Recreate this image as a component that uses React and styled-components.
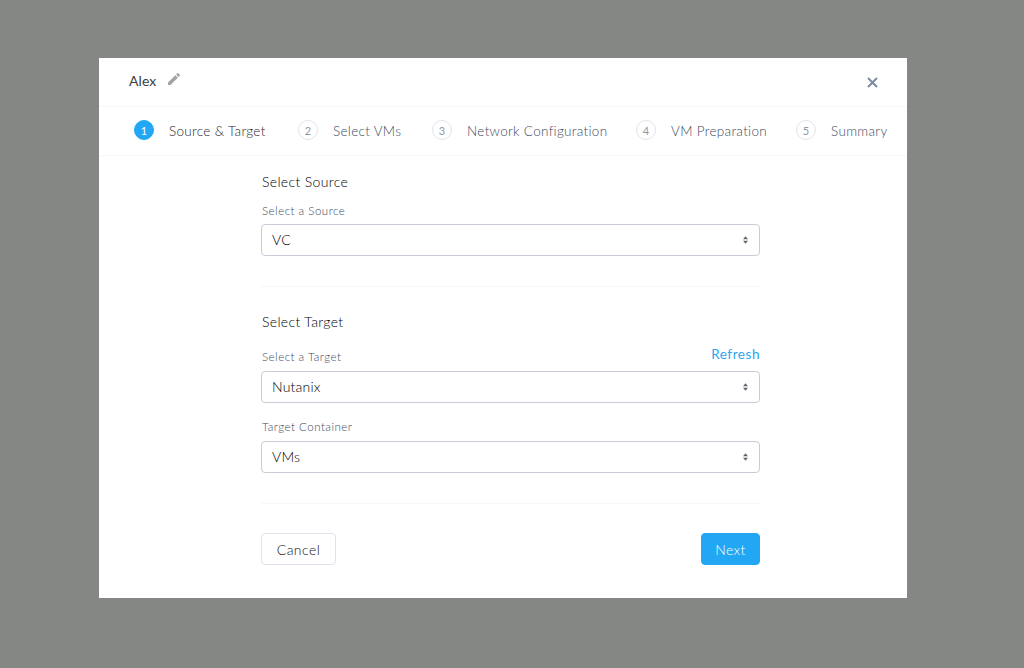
import React from 'react';
import styled, { createGlobalStyle } from 'styled-components';

const GlobalStyle = createGlobalStyle`
  html, body {
    margin: 0;
    padding: 0;
    height: 100%;
    background: #858785;
  }
  * {
    box-sizing: border-box;
  }
`;

const Overlay = styled.div`
  width: 1024px;
  height: 668px;
  padding: 58px 117px 70px 99px;
  background: #858785;
  font-family: Lato, "Open Sans", sans-serif;
  overflow: hidden;
`;

const Modal = styled.div`
  width: 808px;
  height: 540px;
  background: #ffffff;
  display: flex;
  flex-direction: column;
`;

const Header = styled.div`
  height: 49px;
  flex: none;
  display: flex;
  align-items: center;
  justify-content: space-between;
  padding: 0 29px 3px 30px;
  border-bottom: 1px solid #f6f7f9;
`;

const TitleGroup = styled.div`
  display: flex;
  align-items: center;
  gap: 10px;
`;

const Title = styled.span`
  font-size: 14px;
  font-weight: 400;
  letter-spacing: 0.1px;
  color: #3a3e44;
`;

const EditIcon = styled.svg`
  width: 16px;
  height: 16px;
  margin-top: -3px;
  fill: #a0a3a8;
`;

const CloseIcon = styled.svg`
  width: 11px;
  height: 11px;
  margin-top: 4px;
  stroke: #7b8ba0;
  stroke-width: 2;
  fill: none;
`;

const Steps = styled.div`
  height: 49px;
  flex: none;
  display: flex;
  align-items: center;
  padding: 0 0 2px 35px;
  border-bottom: 1px solid #f6f7f9;
`;

const Step = styled.div`
  display: flex;
  align-items: center;
  margin-right: 30px;
`;

const StepNumber = styled.span`
  width: 20px;
  height: 20px;
  flex: none;
  border-radius: 50%;
  display: flex;
  align-items: center;
  justify-content: center;
  font-size: 11px;
  margin-right: 15px;
  color: ${p => (p.$active ? '#ffffff' : '#8f97a6')};
  background: ${p => (p.$active ? '#22a7f5' : '#ffffff')};
  border: 1px solid ${p => (p.$active ? '#22a7f5' : '#e1e4ec')};
`;

const StepLabel = styled.span`
  width: ${p => p.$width}px;
  padding-top: 1px;
  font-size: 13.5px;
  font-weight: 300;
  letter-spacing: 0.32px;
  white-space: nowrap;
  color: ${p => (p.$active ? '#1f2329' : '#3d4a5e')};
`;

const Body = styled.div`
  width: 499px;
  margin-left: 162px;
  flex: 1;
  display: flex;
  flex-direction: column;
`;

const Section = styled.div`
  padding-bottom: 30px;
  border-bottom: 1px solid #f6f7f9;
`;

const SectionTitle = styled.h3`
  margin: 0;
  font-size: 14px;
  line-height: 18px;
  font-weight: 300;
  letter-spacing: 0.35px;
  color: #000000;
  padding-top: ${p => p.$pt}px;
  padding-left: 1px;
`;

const FieldHead = styled.div`
  display: flex;
  justify-content: space-between;
  align-items: flex-end;
  height: 16px;
  padding-left: 1px;
  margin-top: ${p => p.$mt}px;
  margin-bottom: ${p => p.$mb}px;
`;

const FieldLabel = styled.label`
  font-size: 11.5px;
  line-height: 14px;
  font-weight: 300;
  letter-spacing: 0.5px;
  color: #3d4a5e;
`;

const RefreshLink = styled.a`
  font-size: 13.5px;
  line-height: 16px;
  font-weight: 400;
  letter-spacing: 0.55px;
  color: #2aa5f2;
  margin-bottom: 2px;
`;

const SelectBox = styled.div`
  height: 32px;
  display: flex;
  align-items: center;
  justify-content: space-between;
  padding: 0 11px 2px 10px;
  border: 1px solid #c9cbd8;
  border-radius: 4px;
  font-size: 14px;
  font-weight: 300;
  letter-spacing: 0.2px;
  color: #000000;
`;

const Caret = styled.svg`
  width: 5px;
  height: 8px;
  margin-top: 2px;
  fill: #5f6670;
`;

const Footer = styled.div`
  display: flex;
  justify-content: space-between;
  margin-top: 29px;
`;

const Button = styled.button`
  height: 32px;
  width: ${p => p.$width}px;
  padding: 0;
  border-radius: 4px;
  font-family: inherit;
  font-size: 14px;
  font-weight: 300;
  letter-spacing: 0.45px;
  color: ${p => (p.$primary ? '#ffffff' : '#111418')};
  background: ${p => (p.$primary ? '#22a7f5' : '#ffffff')};
  border: 1px solid ${p => (p.$primary ? '#22a7f5' : '#dfe2ea')};
`;

const steps = [
  { label: 'Source & Target', width: 99 },
  { label: 'Select VMs', width: 69 },
  { label: 'Network Configuration', width: 139 },
  { label: 'VM Preparation', width: 95 },
  { label: 'Summary', width: 57 },
];

const Select = ({ value }) => (
  <SelectBox>
    <span>{value}</span>
    <Caret viewBox="0 0 6 9">
      <path d="M3 0 L6 3.5 H0 Z M3 9 L0 5.5 H6 Z" />
    </Caret>
  </SelectBox>
);

const App = () => (
  <Overlay>
    <GlobalStyle />
    <Modal>
      <Header>
        <TitleGroup>
          <Title>Alex</Title>
          <EditIcon viewBox="0 0 24 24">
            <path d="M3 17.25V21h3.75L17.81 9.94l-3.75-3.75L3 17.25zM20.71 7.04a1 1 0 0 0 0-1.41l-2.34-2.34a1 1 0 0 0-1.41 0l-1.83 1.83 3.75 3.75 1.83-1.83z" />
          </EditIcon>
        </TitleGroup>
        <CloseIcon viewBox="0 0 11 11">
          <path d="M1 1 L10 10 M10 1 L1 10" />
        </CloseIcon>
      </Header>
      <Steps>
        {steps.map((step, i) => (
          <Step key={step.label}>
            <StepNumber $active={i === 0}>{i + 1}</StepNumber>
            <StepLabel $active={i === 0} $width={step.width}>{step.label}</StepLabel>
          </Step>
        ))}
      </Steps>
      <Body>
        <Section>
          <SectionTitle $pt={17}>Select Source</SectionTitle>
          <FieldHead $mt={11} $mb={6}>
            <FieldLabel>Select a Source</FieldLabel>
          </FieldHead>
          <Select value="VC" />
        </Section>
        <Section>
          <SectionTitle $pt={26}>Select Target</SectionTitle>
          <FieldHead $mt={17} $mb={7}>
            <FieldLabel>Select a Target</FieldLabel>
            <RefreshLink>Refresh</RefreshLink>
          </FieldHead>
          <Select value="Nutanix" />
          <FieldHead $mt={15} $mb={7}>
            <FieldLabel>Target Container</FieldLabel>
          </FieldHead>
          <Select value="VMs" />
        </Section>
        <Footer>
          <Button $width={75}>Cancel</Button>
          <Button $primary $width={59}>Next</Button>
        </Footer>
      </Body>
    </Modal>
  </Overlay>
);

export default App;
